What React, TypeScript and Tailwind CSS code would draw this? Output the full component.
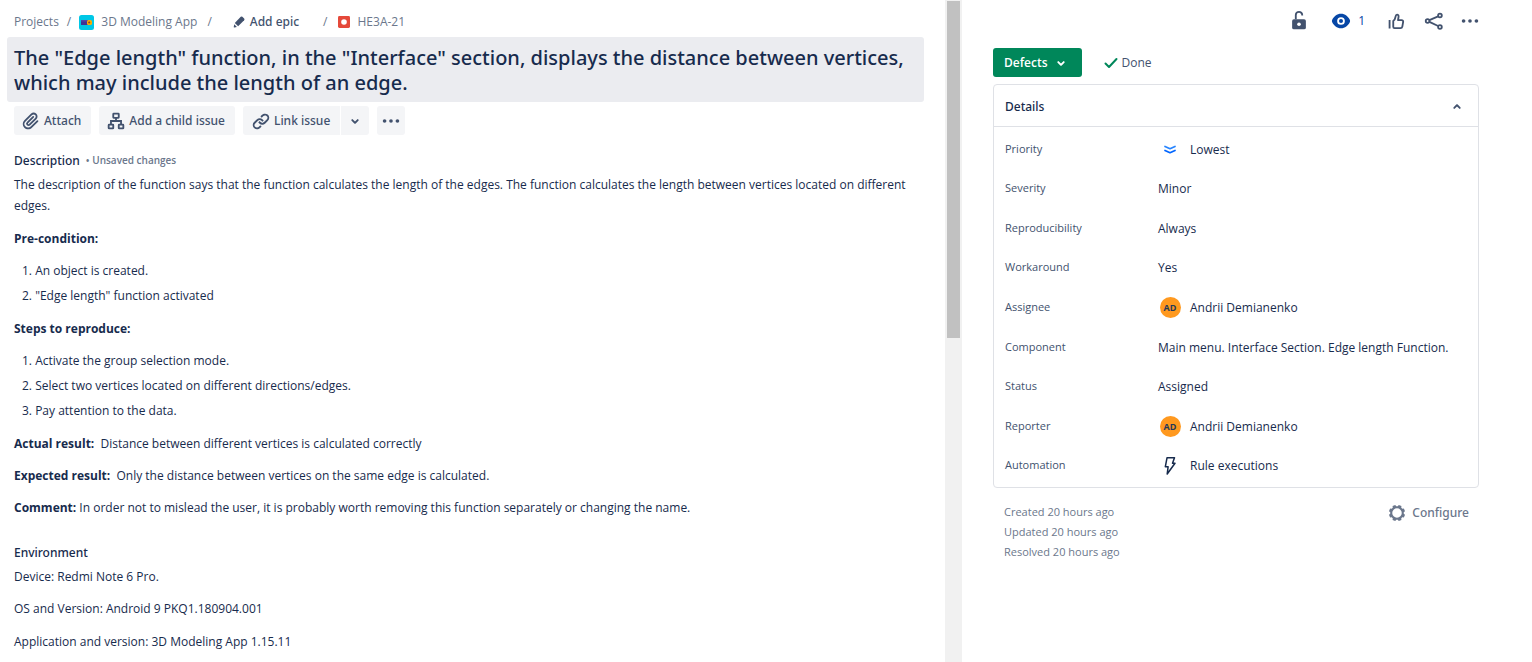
import type { ReactNode } from 'react';

function Glyph({ className = 'size-[22px]', children }: { className?: string; children: ReactNode }) {
  return (
    <svg viewBox="0 0 24 24" className={`shrink-0 ${className}`} fill="none" aria-hidden="true">
      {children}
    </svg>
  );
}

const ATTACH =
  'M11.643 17.965c-1.53 1.495-4.016 1.496-5.542.004a3.773 3.773 0 01.002-5.412l7.147-6.985a2.316 2.316 0 013.233-.003c.893.873.895 2.282.004 3.153l-6.703 6.55a.653.653 0 01-.914-.008.62.62 0 010-.902l6.229-6.087a.941.941 0 000-1.353.995.995 0 00-1.384 0l-6.23 6.087a2.502 2.502 0 000 3.607 2.643 2.643 0 003.683.009l6.703-6.55a4.074 4.074 0 00-.003-5.859 4.306 4.306 0 00-6.002.003l-7.148 6.985a5.655 5.655 0 00-.001 8.118c2.29 2.237 6.015 2.238 8.308-.004l6.707-6.552a.941.941 0 000-1.353.995.995 0 00-1.384 0l-6.705 6.552z';
const LINK_A =
  'M12.856 5.457l-.937.92a1.002 1.002 0 000 1.437 1.047 1.047 0 001.463 0l.984-.966c.967-.95 2.542-1.135 3.602-.288a2.54 2.54 0 01.203 3.81l-2.903 2.852a2.646 2.646 0 01-3.696 0l-1.11-1.09L9 13.57l1.108 1.089c1.822 1.788 4.802 1.788 6.622 0l2.905-2.852a4.558 4.558 0 00-.357-6.82c-1.893-1.517-4.695-1.226-6.422.47';
const LINK_B =
  'M11.144 19.543l.937-.92a1.002 1.002 0 000-1.437 1.047 1.047 0 00-1.462 0l-.985.966c-.967.95-2.542 1.135-3.602.288a2.54 2.54 0 01-.203-3.81l2.903-2.852a2.646 2.646 0 013.696 0l1.11 1.09L15 11.43l-1.108-1.089c-1.822-1.788-4.802-1.788-6.622 0l-2.905 2.852a4.558 4.558 0 00.357 6.82c1.893 1.517 4.695 1.226 6.422-.47';
const CHEVRON =
  'M8.292 10.293a1.009 1.009 0 000 1.419l2.939 2.965c.218.215.5.322.779.322s.556-.107.769-.322l2.93-2.955a1.01 1.01 0 000-1.419.987.987 0 00-1.406 0l-2.298 2.317-2.307-2.327a.99.99 0 00-1.406 0z';

function Chevron({ className }: { className?: string }) {
  return (
    <Glyph className={className}>
      <path d={CHEVRON} fill="currentColor" />
    </Glyph>
  );
}

function Dots() {
  return (
    <Glyph>
      <g fill="currentColor">
        <circle cx="5" cy="12" r="2" />
        <circle cx="12" cy="12" r="2" />
        <circle cx="19" cy="12" r="2" />
      </g>
    </Glyph>
  );
}

function Breadcrumbs() {
  return (
    <nav aria-label="Breadcrumbs" className="flex h-5 items-center text-[#6b778c]">
      <a href="#projects">Projects</a>
      <span className="ml-2">/</span>
      <a href="#app" className="ml-2 flex items-center gap-[7px]">
        <svg viewBox="0 0 15 15" className="size-[15px]" aria-hidden="true">
          <rect width="15" height="15" rx="2.5" fill="#00c7e6" />
          <rect x="2" y="5" width="7" height="5" rx="0.6" fill="#403294" />
          <rect x="2" y="5" width="7" height="1.6" fill="#5243aa" />
          <rect x="8" y="5" width="5" height="5" rx="1.6" fill="#ffab00" />
          <circle cx="10.2" cy="7.500" r="1.100" fill="#8a4a2e" />
        </svg>
        3D Modeling App
      </a>
      <span className="ml-2.5">/</span>
      <button type="button" className="ml-5 flex items-center gap-1 font-['Noto_Sans','Open_Sans',sans-serif] font-medium text-[#42526e]">
        <Glyph className="size-[14px]">
          <g fill="currentColor">
            <path d="M3 20.2a1 1 0 001.2 1.2l4.2-.9-4.5-4.5L3 20.2z" />
            <path d="M20.8 6.2l-3-3a2 2 0 00-2.8 0L4.8 13.500l5.7 5.700L20.800 9a2 2 0 000-2.800z" />
          </g>
        </Glyph>
        Add epic
      </button>
      <span className="ml-6">/</span>
      <a href="#issue" className="ml-2.5 flex items-center gap-2">
        <svg viewBox="0 0 12 12" className="size-3" aria-hidden="true">
          <rect width="12" height="12" rx="1.4" fill="#e5493a" />
          <circle cx="6" cy="6" r="2.8" fill="#fff" />
        </svg>
        HE3A-21
      </a>
    </nav>
  );
}

const actionClass = "flex h-[29px] items-center bg-[#f4f5f7] font-['Noto_Sans','Open_Sans',sans-serif] font-medium text-[#42526e]";

function IssueActions() {
  return (
    <div className="mt-1 flex gap-2 px-[7px]">
      <button type="button" className={`${actionClass} gap-0.5 rounded-[3px] pr-2.5 pl-1.5`}>
        <Glyph>
          <path d={ATTACH} fill="currentColor" />
        </Glyph>
        Attach
      </button>
      <button type="button" className={`${actionClass} gap-0.5 rounded-[3px] pr-2.5 pl-1.5`}>
        <Glyph>
          <g stroke="currentColor" strokeWidth="2">
            <rect x="9" y="4" width="6" height="4.500" rx="0.500" />
            <rect x="4" y="16" width="5" height="4" rx="0.500" />
            <rect x="15" y="16" width="5" height="4" rx="0.500" />
            <path d="M12 8.500v3.500M6.500 16v-4h11v4" />
          </g>
        </Glyph>
        Add a child issue
      </button>
      <div className="flex gap-px">
        <button type="button" className={`${actionClass} gap-0.5 rounded-l-[3px] pr-2.5 pl-[7px]`}>
          <Glyph>
            <path d={LINK_A} fill="currentColor" />
            <path d={LINK_B} fill="currentColor" />
          </Glyph>
          Link issue
        </button>
        <button type="button" aria-label="More link options" className={`${actionClass} rounded-r-[3px] px-[3px]`}>
          <Chevron />
        </button>
      </div>
      <button type="button" aria-label="More actions" className={`${actionClass} rounded-[3px] px-[3px]`}>
        <Dots />
      </button>
    </div>
  );
}

function Steps({ items }: { items: string[] }) {
  return (
    <ol className="mt-[11px] flex list-inside list-decimal flex-col gap-1 pl-2">
      {items.map((item) => (
        <li key={item}>{item}</li>
      ))}
    </ol>
  );
}

function Description() {
  return (
    <section className="px-[7px] leading-[21px]">
      <div className="mt-[15px] flex items-center gap-1.5">
        <h2 className="font-['Noto_Sans','Open_Sans',sans-serif] font-medium">Description</h2>
        <span className="text-[10px] font-semibold text-[#6b778c]">• Unsaved changes</span>
      </div>
      <p className="mt-[3px]">
        The description of the function says that the function calculates the length of the edges. The function
        calculates the length between vertices located on different edges.
      </p>
      <h3 className="mt-3 font-bold">Pre-condition:</h3>
      <Steps items={['An object is created.', '"Edge length" function activated']} />
      <h3 className="mt-3 font-bold">Steps to reproduce:</h3>
      <Steps
        items={[
          'Activate the group selection mode.',
          'Select two vertices located on different directions/edges.',
          'Pay attention to the data.',
        ]}
      />
      <p className="mt-3">
        <strong>Actual result:</strong>&nbsp; Distance between different vertices is calculated correctly
      </p>
      <p className="mt-[11px]">
        <strong>Expected result:</strong>&nbsp; Only the distance between vertices on the same edge is calculated.
      </p>
      <p className="mt-[11px]">
        <strong>Comment:</strong> In order not to mislead the user, it is probably worth removing this function
        separately or changing the name.
      </p>
      <h2 className="mt-6 font-['Noto_Sans','Open_Sans',sans-serif] font-medium">Environment</h2>
      <p className="mt-[3px]">Device: Redmi Note 6 Pro.</p>
      <p className="mt-[11px]">OS and Version: Android 9 PKQ1.180904.001</p>
      <p className="mt-3">Application and version: 3D Modeling App 1.15.11</p>
    </section>
  );
}

function IssueToolbar() {
  return (
    <div className="-mr-0.5 flex h-[22px] items-center justify-end text-[#42526e]">
      <button type="button" aria-label="Restrict access">
        <Glyph>
          <rect x="4.500" y="10" width="15" height="11" rx="2" fill="currentColor" />
          <path d="M8.500 10V5.500a3.500 3.500 0 017 0V6" stroke="currentColor" strokeWidth="2" />
          <circle cx="12" cy="15.500" r="2" fill="#fff" />
        </Glyph>
      </button>
      <button type="button" aria-label="Watchers: 1" className="ml-5 flex items-center gap-1.5 text-[#0747a6]">
        <Glyph>
          <path
            d="M12 4c4.500 0 7.800 3 9.600 6.600a3 3 0 010 2.800C19.800 17 16.500 20 12 20s-7.800-3-9.600-6.600a3 3 0 010-2.800C4.200 7 7.500 4 12 4z"
            fill="currentColor"
          />
          <circle cx="12" cy="12" r="3.200" stroke="#fff" strokeWidth="2" />
        </Glyph>
        1
      </button>
      <button type="button" aria-label="Vote" className="ml-5">
        <Glyph>
          <path
            d="M5 11v9.200M9 12c1.600-1.100 2.300-3.100 2.600-5 .2-1.400.6-2 1.500-2 1.300 0 1.900 1.100 1.700 2.400l-.6 3.600h3.900c1.200 0 1.900.8 1.700 1.900l-.9 5.200c-.2 1.100-.9 1.700-2 1.700h-6.500c-.9 0-1.400-.5-1.400-1.400V12z"
            stroke="currentColor"
            strokeWidth="2"
            strokeLinejoin="round"
          />
        </Glyph>
      </button>
      <button type="button" aria-label="Share" className="ml-4">
        <Glyph>
          <g stroke="currentColor" strokeWidth="2">
            <circle cx="5" cy="12" r="2" />
            <circle cx="18.500" cy="6" r="2" />
            <circle cx="18.500" cy="18.500" r="2" />
            <path d="M7 11l9.500-4M7 13l9.500 4.500" />
          </g>
        </Glyph>
      </button>
      <button type="button" aria-label="More" className="ml-3.5">
        <Dots />
      </button>
    </div>
  );
}

function Person({ name }: { name: string }) {
  return (
    <>
      <span className="flex w-6 justify-center">
        <span className="flex size-[21px] items-center justify-center rounded-full bg-[#ff991f] text-[9px] font-bold text-[#253858]">
          AD
        </span>
      </span>
      <span>{name}</span>
    </>
  );
}

const fields: { label: string; value: ReactNode }[] = [
  {
    label: 'Priority',
    value: (
      <>
        <span className="flex w-6 justify-center">
          <svg viewBox="0 0 14 14" className="size-[14px]" fill="none" strokeWidth="1.700" strokeLinecap="round" strokeLinejoin="round" aria-hidden="true">
            <path d="M2 3.500l5 2.200 5-2.200" stroke="#2684ff" />
            <path d="M2 7.500l5 2.200 5-2.200" stroke="#0065ff" />
          </svg>
        </span>
        <span>Lowest</span>
      </>
    ),
  },
  { label: 'Severity', value: 'Minor' },
  { label: 'Reproducibility', value: 'Always' },
  { label: 'Workaround', value: 'Yes' },
  { label: 'Assignee', value: <Person name="Andrii Demianenko" /> },
  { label: 'Component', value: 'Main menu. Interface Section. Edge length Function.' },
  { label: 'Status', value: 'Assigned' },
  { label: 'Reporter', value: <Person name="Andrii Demianenko" /> },
  {
    label: 'Automation',
    value: (
      <>
        <span className="flex w-6 justify-center">
          <svg viewBox="0 0 12 20" className="h-5 w-3" fill="none" stroke="#172b4d" strokeWidth="1.500" strokeLinejoin="round" aria-hidden="true">
            <path d="M3 1.800h7.500L8.500 7.200H11L3.200 18l.9-7.200H1.300L3 1.800z" />
          </svg>
        </span>
        <span>Rule executions</span>
      </>
    ),
  },
];

function DetailsCard() {
  return (
    <section className="mt-[7px] rounded-[4px] border border-[#dfe1e6]">
      <div className="flex h-[42px] items-center justify-between border-b border-[#dfe1e6] pt-0.5 pr-2.5 pl-[11px]">
        <h2 className="font-['Noto_Sans','Open_Sans',sans-serif] font-medium">Details</h2>
        <button type="button" aria-label="Collapse details" className="text-[#42526e]">
          <Chevron className="size-[22px] rotate-180" />
        </button>
      </div>
      <dl className="mt-[3px] mb-px grid min-h-[356px] auto-rows-fr">
        {fields.map((f) => (
          <div key={f.label} className="flex items-center px-[11px]">
            <dt className="w-[153px] shrink-0 pb-0.5 text-[11px] text-[#42526e]">{f.label}</dt>
            <dd className="flex min-w-0 items-center gap-2">{f.value}</dd>
          </div>
        ))}
      </dl>
    </section>
  );
}

const gearTeeth = [22.5, 67.5, 112.5, 157.5, 202.5, 247.5, 292.5, 337.5];

function Sidebar() {
  return (
    <aside className="w-[570px] shrink-0 pt-2.5 pr-[53px] pl-[31px]">
      <IssueToolbar />
      <div className="mt-4 flex items-center">
        <button type="button" className="flex h-[29px] items-center gap-0.5 rounded-[3px] bg-[#00875a] pr-2.5 pl-[11px] font-semibold text-white">
          Defects
          <Chevron className="size-[22px]" />
        </button>
        <span className="ml-[22px] flex items-center gap-1 pt-px text-[#42526e]">
          <svg viewBox="0 0 14 12" className="h-3 w-3.5" fill="none" aria-hidden="true">
            <path d="M1.500 6.500l3.500 3.500 7.500-8" stroke="#00875a" strokeWidth="2" strokeLinecap="round" strokeLinejoin="round" />
          </svg>
          Done
        </span>
      </div>
      <DetailsCard />
      <footer className="mt-3.5 flex items-start justify-between pr-2.5 pl-[11px] text-[#6b778c]">
        <div className="text-[11px] leading-5">
          <p>Created 20 hours ago</p>
          <p>Updated 20 hours ago</p>
          <p>Resolved 20 hours ago</p>
        </div>
        <button type="button" className="flex items-center gap-1 font-['Noto_Sans','Open_Sans',sans-serif] font-medium">
          <Glyph>
            <circle cx="12" cy="12" r="6.300" stroke="currentColor" strokeWidth="2.200" />
            {gearTeeth.map((angle) => (
              <path key={angle} d="M9.700 5.800l.7-2.600h3.200l.7 2.600z" fill="currentColor" transform={`rotate(${angle} 12 12)`} />
            ))}
          </Glyph>
          Configure
        </button>
      </footer>
    </aside>
  );
}

export default function App() {
  return (
    <div className="flex h-screen overflow-hidden bg-white font-['Open_Sans','Noto_Sans',sans-serif] text-[12px] leading-5 text-[#172b4d]">
      <main className="min-w-0 flex-1 overflow-hidden pt-3 pr-[21px] pl-[7px]">
        <div className="px-[7px]">
          <Breadcrumbs />
        </div>
        <h1 className="mt-[5px] rounded-[3px] bg-[#ebecf0] px-[7px] pt-2 pb-[7px] font-['Noto_Sans','Open_Sans',sans-serif] text-[20px] leading-[25px] font-medium">
          The "Edge length" function, in the "Interface" section, displays the distance between vertices, which may
          include the length of an edge.
        </h1>
        <IssueActions />
        <Description />
      </main>
      <div aria-hidden="true" className="w-[17px] shrink-0 bg-[#f1f1f1] px-0.5 pt-px">
        <div className="h-[51%] bg-[#c1c1c1]" />
      </div>
      <Sidebar />
    </div>
  );
}
